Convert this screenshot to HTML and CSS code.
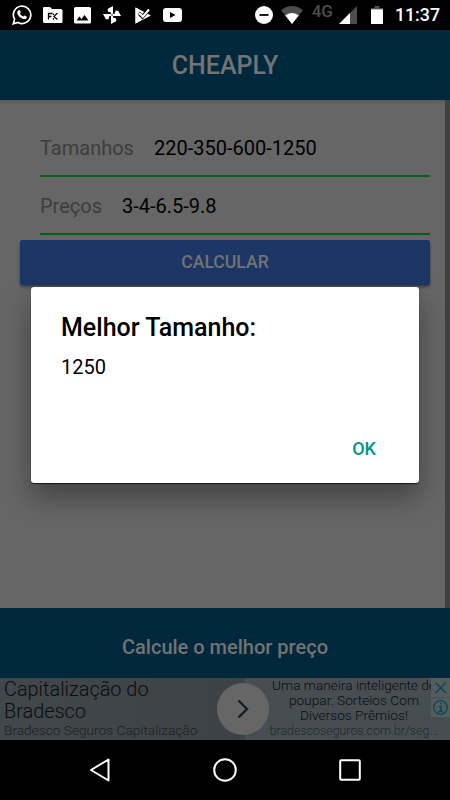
FILE: index.html
```html
<!DOCTYPE html>
<html lang="pt-BR">
<head>
    <meta charset="UTF-8">
    <meta name="viewport" content="width=device-width, initial-scale=1.0">
    <title>Cheaply</title>
    <link rel="stylesheet" href="styles.css">
</head>
<body>
    <div class="status-bar">
        <div class="notifications">
            <svg width="20" height="20" viewBox="0 0 20 20">
                <path d="M1.3 18.8l1.3-4.6a8.7 8.7 0 1 1 3.3 3.2z" fill="none" stroke="#fff" stroke-width="1.7"/>
                <path d="M6.6 5.2c.6-.5 1.2-.4 1.5.3l.7 1.6c.1.4-.6 1.1-.8 1.4.8 1.6 1.9 2.5 3.4 3.1.4-.4.9-1.3 1.4-1.1l1.8.9c.6.3.2 1.5-.3 2-1.1 1-2.7.8-4.3.1-2.2-1-4-3-4.7-5-.4-1.3.2-2.6 1.3-3.3z" fill="#fff"/>
            </svg>
            <svg width="20" height="16" viewBox="0 0 20 16">
                <path d="M1 0h6l2 2h9q1.500 0 1.500 1.500v11q0 1.500-1.500 1.500h-16.500q-1.500 0-1.500-1.500v-13.500q0-1 1-1z" fill="#fff"/>
                <path d="M5.500 12.500v-6h4M5.500 9.500h3M14.500 6l-3.500 3.400 3.500 3.200M10.500 6.500v1.500M10.500 11v1.500" fill="none" stroke="#000" stroke-width="1.300"/>
            </svg>
            <svg width="17" height="17" viewBox="0 0 17 17">
                <rect width="17" height="16.500" rx="1.500" fill="#fff"/>
                <path d="M2.500 13.500l3-4 2 2.500 3-4 4 5.500z" fill="#000"/>
            </svg>
            <svg class="photos" width="20" height="20" viewBox="0 0 20 20">
                <g fill="#fff">
                    <path id="blade" d="M11 10V1L5.800 3.800V6.500L9 7.500V10z"/>
                    <use href="#blade" transform="rotate(90 10 10)"/>
                    <use href="#blade" transform="rotate(180 10 10)"/>
                    <use href="#blade" transform="rotate(270 10 10)"/>
                </g>
                <circle cx="10" cy="10" r=".8" fill="#000"/>
            </svg>
            <svg width="17" height="17" viewBox="0 0 17 17">
                <path d="M.5.500L16 8.500.500 16.500z" fill="#fff"/>
                <path d="M3.500 5.800l4 4L14 2.300" fill="none" stroke="#000" stroke-width="3.800"/>
                <path d="M.5.500l3 1.600v13L.5 16.500z" fill="#fff"/>
                <path d="M4.200 6l3.600 3.600L14 2.500" fill="none" stroke="#fff" stroke-width="2.200"/>
            </svg>
            <svg width="19" height="14" viewBox="0 0 19 14">
                <rect width="19" height="14" rx="3" fill="#fff"/>
                <path d="M7 4l5.500 3L7 10z" fill="#000"/>
            </svg>
        </div>
        <div class="system-icons">
            <svg class="dnd" width="18" height="18" viewBox="0 0 18 18">
                <circle cx="9" cy="9" r="9" fill="#fff"/>
                <path d="M4.500 9h9" stroke="#000" stroke-width="1.800"/>
            </svg>
            <svg class="wifi" width="22" height="18" viewBox="0 0 22 18">
                <path d="M0 4.300C6.500-1.400 15.500-1.400 22 4.300L11 18z" fill="#4d4d4d"/>
                <path d="M4.300 9.600C8 6.200 14 6.200 17.700 9.600L11 18z" fill="#fff"/>
            </svg>
            <span class="network">4G</span>
            <svg class="signal" width="18" height="18" viewBox="0 0 18 18">
                <path d="M18 0v18H0z" fill="#4d4d4d"/>
                <path d="M11 7v11H0z" fill="#fff"/>
            </svg>
            <svg class="battery" width="12" height="18" viewBox="0 0 12 18">
                <path d="M3.500 0h5v2H12v1.500H0V2h3.500z" fill="#4d4d4d"/>
                <path d="M0 3.300h12V18H0z" fill="#fff"/>
            </svg>
            <span class="clock">11:37</span>
        </div>
    </div>

    <header class="app-header">
        <h1>CHEAPLY</h1>
    </header>

    <main class="content">
        <div class="form">
            <div class="field">
                <label>Tamanhos</label>
                <span class="value">220-350-600-1250</span>
            </div>
            <div class="field">
                <label>Preços</label>
                <span class="value">3-4-6.5-9.8</span>
            </div>
            <button type="button" class="calculate">CALCULAR</button>
        </div>
        <div class="scroll-bar"></div>

        <div class="dialog">
            <h2>Melhor Tamanho:</h2>
            <p>1250</p>
            <button type="button" class="ok">OK</button>
        </div>
    </main>

    <footer class="app-footer">Calcule o melhor preço</footer>

    <div class="ad">
        <div class="ad-left">
            <div class="ad-title">Capitalização do<br>Bradesco</div>
            <div class="ad-brand">Bradesco Seguros Capitalização</div>
        </div>
        <div class="ad-right">
            <div class="ad-text">Uma maneira inteligente de<br>poupar. Sorteios Com<br>Diversos Prêmios!</div>
            <div class="ad-link">bradescoseguros.com.br/seg...</div>
        </div>
        <div class="ad-arrow">
            <svg width="12" height="20" viewBox="0 0 12 20">
                <path d="M1.500 1.500L10 10l-8.500 8.500" fill="none" stroke="#141d26" stroke-width="2.400"/>
            </svg>
        </div>
        <div class="ad-controls">
            <svg width="19" height="19" viewBox="0 0 19 19">
                <path d="M4.500 4.500l10.500 10.500M15 4.500L4.500 15" stroke="#004b5a" stroke-width="1.500"/>
            </svg>
            <svg width="19" height="19" viewBox="0 0 19 19">
                <circle cx="9.500" cy="9.500" r="6.800" fill="none" stroke="#004b5a" stroke-width="1.300"/>
                <path d="M8 8.500h2v5M7.500 13.500h4.500M9 5.500h1.500" fill="none" stroke="#004b5a" stroke-width="1.500"/>
            </svg>
        </div>
    </div>

    <nav class="nav-bar">
        <svg width="22" height="26" viewBox="0 0 22 26">
            <path d="M19.500 2.500v21L2 13z" fill="none" stroke="#fff" stroke-width="2" stroke-linejoin="round"/>
        </svg>
        <svg width="24" height="24" viewBox="0 0 24 24">
            <circle cx="12" cy="12" r="10.800" fill="none" stroke="#fff" stroke-width="2"/>
        </svg>
        <svg width="22" height="22" viewBox="0 0 22 22">
            <rect x="1.200" y="1.200" width="19.600" height="19.600" rx="1" fill="none" stroke="#fff" stroke-width="2"/>
        </svg>
    </nav>
</body>
</html>
```
FILE: styles.css
```css
* {
    box-sizing: border-box;
}
body {
    margin: 0;
    height: 800px;
    display: flex;
    flex-direction: column;
    overflow: hidden;
    background: #000;
    color: #000;
    font-family: Roboto, sans-serif;
}
h1, h2, p {
    margin: 0;
}
svg {
    display: block;
    flex: none;
}
button {
    border: none;
    font-family: inherit;
}

/* Status bar */
.status-bar {
    height: 30px;
    display: flex;
    justify-content: space-between;
    padding: 0 10px 0 12px;
}
.notifications,
.system-icons {
    display: flex;
    align-items: center;
}
.notifications {
    gap: 11px;
}
.photos {
    margin-right: 2px;
}
.dnd {
    margin-right: 8px;
}
.wifi {
    margin-right: 9px;
}
.network {
    color: #4d4d4d;
    font-size: 17px;
    font-weight: 500;
    line-height: 16px;
    margin: -8px 6px 0 0;
}
.signal {
    margin-right: 14px;
}
.battery {
    margin-right: 12px;
}
.clock {
    color: #fff;
    font-size: 17.8px;
    font-weight: 500;
    line-height: 30px;
}

/* Header */
.app-header {
    height: 70px;
    display: flex;
    align-items: center;
    justify-content: center;
    background: #00283c;
    color: #737373;
}
.app-header h1 {
    font-size: 25px;
    font-weight: 500;
}

/* Form */
.content {
    position: relative;
    height: 508px;
    display: flex;
    background: linear-gradient(#5a5a5a, #666 5px);
}
.form {
    flex: 1;
    padding: 19px 15px 0 20px;
}
.field {
    height: 58px;
    margin-left: 20px;
    padding-top: 2px;
    display: flex;
    align-items: center;
    gap: 20px;
    border-bottom: 2px solid #075f1d;
    font-size: 20px;
}
.field label {
    color: #3d3d3d;
}
.calculate {
    display: block;
    width: 100%;
    height: 45px;
    margin-top: 5px;
    padding: 0 0 1px;
    border-radius: 3px;
    background: #1c3666;
    box-shadow: 0 2px 3px rgba(0, 0, 0, 0.4);
    color: #737373;
    font-size: 17.6px;
    font-weight: 500;
}
.scroll-bar {
    width: 5px;
    background: #404040;
}

/* Alert */
.dialog {
    position: absolute;
    top: 187px;
    left: 31px;
    width: 388px;
    height: 196px;
    padding: 26px 30px 0;
    display: flex;
    flex-direction: column;
    border-radius: 3px;
    background: #fff;
    box-shadow: 0 1px 1px rgba(0, 0, 0, 0.7), 0 14px 28px rgba(0, 0, 0, 0.35);
}
.dialog h2 {
    font-size: 25px;
    font-weight: 500;
    line-height: 30px;
}
.dialog p {
    margin-top: 11px;
    font-size: 20px;
    line-height: 26px;
}
.ok {
    align-self: flex-end;
    margin: 56px 13px 0 0;
    padding: 0;
    background: none;
    color: #009688;
    font-size: 18px;
    font-weight: 500;
    line-height: 26px;
}

/* Footer */
.app-footer {
    height: 70px;
    padding-top: 8px;
    display: flex;
    align-items: center;
    justify-content: center;
    background: #00283c;
    color: #737373;
    font-size: 20px;
    font-weight: 500;
}

/* Ad banner */
.ad {
    position: relative;
    height: 62px;
    display: flex;
    background: #464e52;
    color: #0c0d0e;
    white-space: nowrap;
    font-weight: 300;
}
.ad-left {
    width: 245px;
    padding: 1px 0 0 4px;
    background: linear-gradient(to right, #41474b, #3d4246);
}
.ad-title {
    font-size: 19.9px;
    line-height: 22px;
}
.ad-brand {
    color: #1d1f20;
    font-size: 13.7px;
    line-height: 15px;
}
.ad-right {
    width: 205px;
    padding-left: 13px;
    text-align: center;
}
.ad-text {
    font-size: 13.7px;
    line-height: 15px;
}
.ad-link {
    color: #25282a;
    font-size: 12.4px;
    line-height: 15px;
}
.ad-arrow {
    position: absolute;
    top: 5px;
    left: 217px;
    width: 52px;
    height: 52px;
    display: flex;
    align-items: center;
    justify-content: center;
    border-radius: 50%;
    background: #666;
}
.ad-controls {
    position: absolute;
    top: 0;
    right: 0;
    display: flex;
    flex-direction: column;
    gap: 1px;
}
.ad-controls svg {
    background: #575b5d;
}

/* Navigation */
.nav-bar {
    height: 60px;
    padding: 0 89px;
    display: flex;
    align-items: center;
    justify-content: space-between;
}
```
